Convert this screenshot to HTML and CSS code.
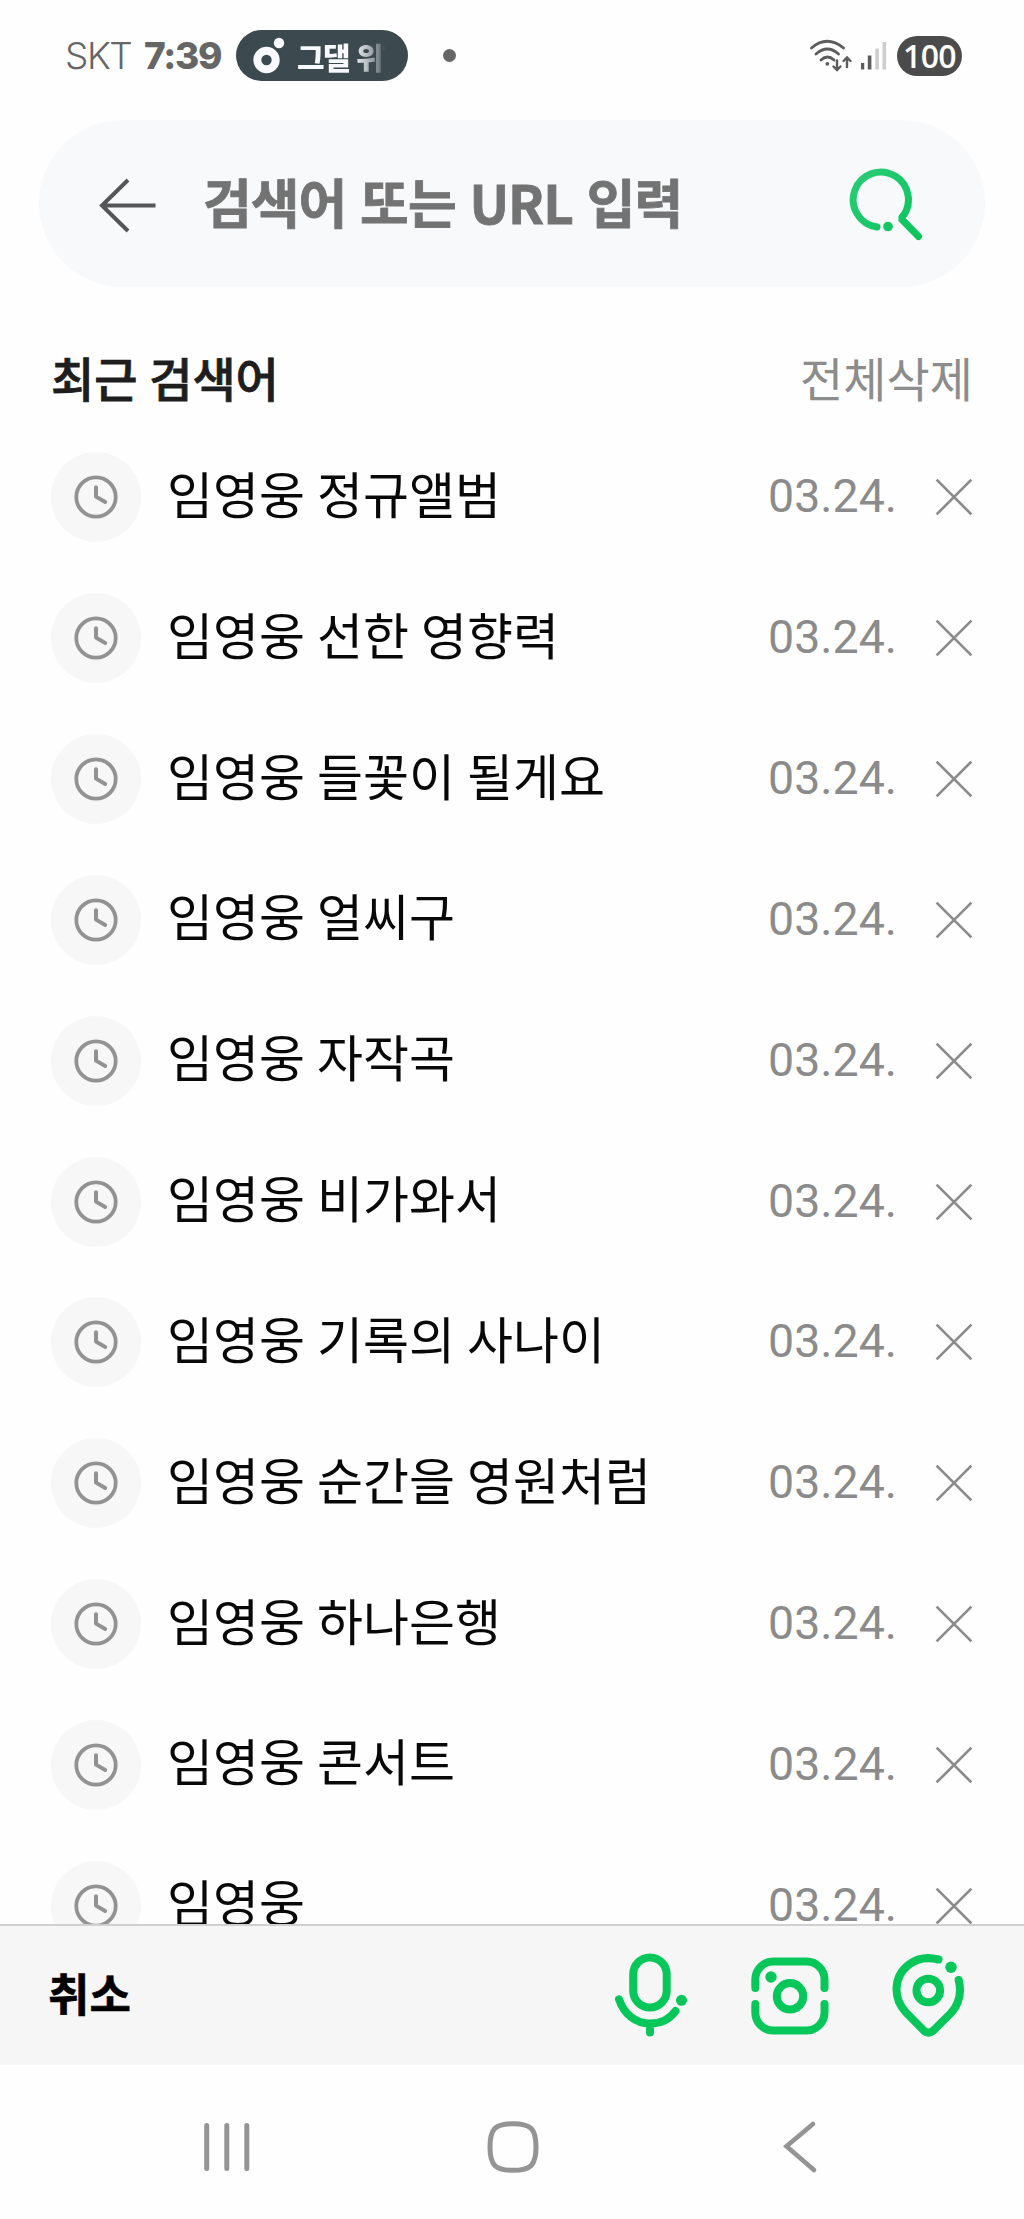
FILE: index.html
```html
<!DOCTYPE html>
<html lang="ko">
<head>
<meta charset="utf-8">
<title>최근 검색어</title>
<link rel="stylesheet" href="styles.css">
</head>
<body>
<svg class="defs" width="0" height="0">
  <symbol id="clock" viewBox="0 0 44 44">
    <circle cx="22" cy="22" r="19.7" fill="none" stroke="#929292" stroke-width="3.8"/>
    <path d="M22 12.2V21.6L31.2 27" fill="none" stroke="#929292" stroke-width="4" stroke-linecap="round" stroke-linejoin="round"/>
  </symbol>
  <symbol id="close" viewBox="0 0 38 38">
    <path d="M1.6 1.6L36.4 36.4M36.4 1.6L1.6 36.4" fill="none" stroke="#8b8b8b" stroke-width="2.7"/>
  </symbol>
</svg>
<header class="status">
  <span class="carrier">SKT</span>
  <span class="time">7:39</span>
  <span class="pill">
    <svg width="34" height="38" viewBox="252 37 34 38"><circle cx="266.5" cy="60" r="9.2" fill="none" stroke="#f7f9ff" stroke-width="8"/><circle cx="279" cy="43" r="5.2" fill="#f7f9ff"/></svg>
    <span class="song">그댈 위한</span>
  </span>
  <i class="dot"></i>
  <svg class="signal" width="80" height="36" viewBox="808 38 80 36" fill="none" stroke="#5c5c5c" stroke-width="2.8" stroke-linecap="round">
    <path d="M811.5 48Q827 34.5 843.5 48M816 54Q827.500 44 838.500 54M821 60Q827.500 54 834 60"/>
    <circle cx="827.300" cy="63.800" r="1.900" fill="#5c5c5c" stroke="none"/>
    <path d="M837 60.500V69.500M833.500 66.500L837 70L840.500 66.500M847 67V57.500M843.500 61L847 57.500L850.500 61" stroke-width="2.400"/>
    <g stroke="none"><rect x="861" y="63" width="3.200" height="6.500" fill="#5c5c5c"/><rect x="867.800" y="55.500" width="3.600" height="14" fill="#5c5c5c"/><rect x="875.300" y="48.500" width="3.600" height="21" fill="#cdcdcd"/><rect x="882.500" y="42" width="3.600" height="27.500" fill="#cdcdcd"/></g>
  </svg>
  <span class="battery">100</span>
</header>
<div class="search">
  <svg width="60" height="56" viewBox="98 177 60 56" fill="none" stroke="#565656" stroke-width="4"><path d="M155.500 205.500H102M128 180L102 205.500L128 231"/></svg>
  <span class="placeholder">검색어 또는 URL 입력</span>
  <svg class="find" width="76" height="76" viewBox="848 166 76 76">
    <defs><linearGradient id="green" x1="0" y1="0" x2="1" y2="1"><stop offset="0" stop-color="#2bcb76"/><stop offset="1" stop-color="#09c55a"/></linearGradient></defs>
    <path d="M877 227A27.600 27.600 0 1 1 901 218.500L918.500 236.500" fill="none" stroke="url(#green)" stroke-width="7" stroke-linecap="round" stroke-linejoin="bevel"/>
    <circle cx="888" cy="226.500" r="4.800" fill="#12c761"/>
  </svg>
</div>
<main class="recent">
  <div class="heading"><h1>최근 검색어</h1><span class="clear">전체삭제</span></div>
  <ul>
    <li><span class="badge"><svg><use href="#clock"/></svg></span><span class="term">임영웅 정규앨범</span><time>03.24.</time><svg class="x"><use href="#close"/></svg></li>
    <li><span class="badge"><svg><use href="#clock"/></svg></span><span class="term">임영웅 선한 영향력</span><time>03.24.</time><svg class="x"><use href="#close"/></svg></li>
    <li><span class="badge"><svg><use href="#clock"/></svg></span><span class="term">임영웅 들꽃이 될게요</span><time>03.24.</time><svg class="x"><use href="#close"/></svg></li>
    <li><span class="badge"><svg><use href="#clock"/></svg></span><span class="term">임영웅 얼씨구</span><time>03.24.</time><svg class="x"><use href="#close"/></svg></li>
    <li><span class="badge"><svg><use href="#clock"/></svg></span><span class="term">임영웅 자작곡</span><time>03.24.</time><svg class="x"><use href="#close"/></svg></li>
    <li><span class="badge"><svg><use href="#clock"/></svg></span><span class="term">임영웅 비가와서</span><time>03.24.</time><svg class="x"><use href="#close"/></svg></li>
    <li><span class="badge"><svg><use href="#clock"/></svg></span><span class="term">임영웅 기록의 사나이</span><time>03.24.</time><svg class="x"><use href="#close"/></svg></li>
    <li><span class="badge"><svg><use href="#clock"/></svg></span><span class="term">임영웅 순간을 영원처럼</span><time>03.24.</time><svg class="x"><use href="#close"/></svg></li>
    <li><span class="badge"><svg><use href="#clock"/></svg></span><span class="term">임영웅 하나은행</span><time>03.24.</time><svg class="x"><use href="#close"/></svg></li>
    <li><span class="badge"><svg><use href="#clock"/></svg></span><span class="term">임영웅 콘서트</span><time>03.24.</time><svg class="x"><use href="#close"/></svg></li>
    <li><span class="badge"><svg><use href="#clock"/></svg></span><span class="term">임영웅</span><time>03.24.</time><svg class="x"><use href="#close"/></svg></li>
  </ul>
</main>
<footer class="tools">
  <span class="cancel">취소</span>
  <svg width="74" height="86" viewBox="614 1952.500 74 86" fill="none" stroke="#07c75b" stroke-width="8" stroke-linecap="round">
    <rect x="633.200" y="1957" width="33.500" height="50" rx="16.750"/>
    <path d="M619 1998.800C624 2014 636 2023 650 2023C661 2023 669.500 2019 675.500 2010.500M650 2023V2032"/>
    <circle cx="681.500" cy="1999.800" r="5.500" fill="#07c75b" stroke="none"/>
  </svg>
  <svg width="78" height="78" viewBox="750.500 1956.500 78 78" fill="none" stroke="#07c75b" stroke-width="8" stroke-linecap="round">
    <path d="M754.800 1987.500V1979A18 18 0 0 1 772.800 1961H806A18 18 0 0 1 824 1979V1987.500M754.800 2003.500V2012A18 18 0 0 0 772.800 2030H806A18 18 0 0 0 824 2012V2003.500"/>
    <circle cx="789.500" cy="1995.800" r="13.200"/>
    <circle cx="770.500" cy="1976.500" r="5.700" fill="#07c75b" stroke="none"/>
  </svg>
  <svg width="74" height="86" viewBox="891 1952.500 74 86" fill="none" stroke="#07c75b" stroke-width="8" stroke-linecap="round" stroke-linejoin="round">
    <path d="M938.500 1959C915 1953 896.500 1969 896.500 1989C896.500 1998 899.500 2005 906 2012L924 2030.300Q928.500 2034 933 2030.300L951 2012.500C959.500 2003 962 1993 958.700 1979.500"/>
    <circle cx="928.300" cy="1990" r="11.800"/>
    <circle cx="951" cy="1966.800" r="5.700" fill="#07c75b" stroke="none"/>
  </svg>
</footer>
<nav>
  <svg width="48" height="52" viewBox="203 2121 48 52" fill="none" stroke="#949494" stroke-width="5" stroke-linecap="round"><path d="M206.700 2125.500V2168.500M226.800 2125.500V2168.500M246.800 2125.500V2168.500"/></svg>
  <svg width="52" height="52" viewBox="487 2121 52 52" fill="none" stroke="#949494" stroke-width="5"><path d="M513 2123.700C531 2123.700 536 2129 536 2147S531 2170.300 513 2170.300S490 2165 490 2147S495 2123.700 513 2123.700Z"/></svg>
  <svg width="36" height="56" viewBox="782 2119 36 56" fill="none" stroke="#949494" stroke-width="4.600" stroke-linecap="round"><path d="M813 2124L786.500 2146.300L814 2170"/></svg>
</nav>
</body>
</html>
```
FILE: styles.css
```css
* { box-sizing: border-box; }
body {
  margin: 0;
  width: 1024px;
  height: 2219px;
  overflow: hidden;
  display: grid;
  grid-template-rows: 120px 167px 1637px 141px 154px;
  background: #fefefe;
  font-family: "Noto Sans CJK KR", sans-serif;
}
svg { flex: none; display: block; }
.defs { position: absolute; }
.status { display: flex; align-items: center; height: 111px; padding-left: 65px; color: #666; }
.carrier { width: 79px; font: 300 37px/1 Inter, sans-serif; letter-spacing: -1.5px; }
.time { width: 92px; font: 800 37px/1 Inter, sans-serif; letter-spacing: -1.3px; white-space: nowrap; }
.pill { display: flex; align-items: center; width: 172px; height: 51px; padding-left: 16px; border-radius: 26px; background: #3c494e; }
.song {
  width: 92px;
  margin-left: 11px;
  overflow: hidden;
  white-space: nowrap;
  font-size: 30px;
  line-height: 44px;
  font-weight: 900;
  letter-spacing: -1.5px;
  color: transparent;
  background: linear-gradient(90deg, #f7f9ff 60%, #c0c6ca 74%, #7f898e 88%, #3c494e 96%);
  background-clip: text;
  -webkit-background-clip: text;
}
.dot { width: 13px; height: 13px; margin-left: 35px; border-radius: 50%; background: #666; }
.signal { margin-left: 352px; }
.battery { width: 65px; height: 40px; margin-left: 9px; border-radius: 20px; background: #4b4b4b; color: #fff; font: 600 32px/39px "Open Sans", sans-serif; text-align: center; letter-spacing: -.7px; }
.search { display: flex; align-items: center; width: 946px; margin-left: 39px; padding-left: 59px; border-radius: 84px; background: #f7f9fb; padding-top: 3px; }
.placeholder { width: 645px; margin-left: 45px; padding-bottom: 9px; font-size: 53px; line-height: 60px; font-weight: 700; letter-spacing: -1px; color: #737373; -webkit-text-stroke: .8px #737373; white-space: nowrap; }
.find { margin-bottom: 3px; }
.recent { overflow: hidden; }
.heading { display: flex; justify-content: space-between; height: 140px; padding: 60px 51px 0 51px; font-size: 47px; line-height: 60px; }
h1 { margin: 0; font-size: inherit; font-weight: 500; word-spacing: -1.5px; color: #1e1e1e; -webkit-text-stroke: .8px #1e1e1e; }
.clear { color: #8c8c8c; }
ul { margin: 0; padding: 0; list-style: none; }
li { display: flex; align-items: center; height: 140.83px; padding-left: 51px; color: #080808; }
.badge { display: grid; place-items: center; width: 90px; height: 90px; border-radius: 50%; background: #f7f7f7; }
.badge svg { width: 44px; height: 44px; }
.term { width: 601px; margin-left: 26px; padding-bottom: 11px; font-size: 50px; line-height: 60px; word-spacing: -2px; }
time { width: 166.500px; padding-bottom: 2px; font: 400 46.5px/60px Roboto, sans-serif; color: #8b8b8b; }
.x { width: 38px; height: 38px; }
.tools { display: flex; align-items: center; padding-left: 48px; background: #f6f6f6; border-top: 2px solid #d0d0d0; }
.cancel { width: 566px; padding-bottom: 5px; font-size: 45px; line-height: 60px; font-weight: 700; color: #000; -webkit-text-stroke: .6px #000; }
.tools svg + svg { margin-left: 62.500px; }
nav { display: flex; align-items: center; padding: 10px 0 0 203px; background: #fefefe; }
nav svg:nth-child(2) { margin-left: 236px; }
nav svg:nth-child(3) { margin-left: 243px; }
```
